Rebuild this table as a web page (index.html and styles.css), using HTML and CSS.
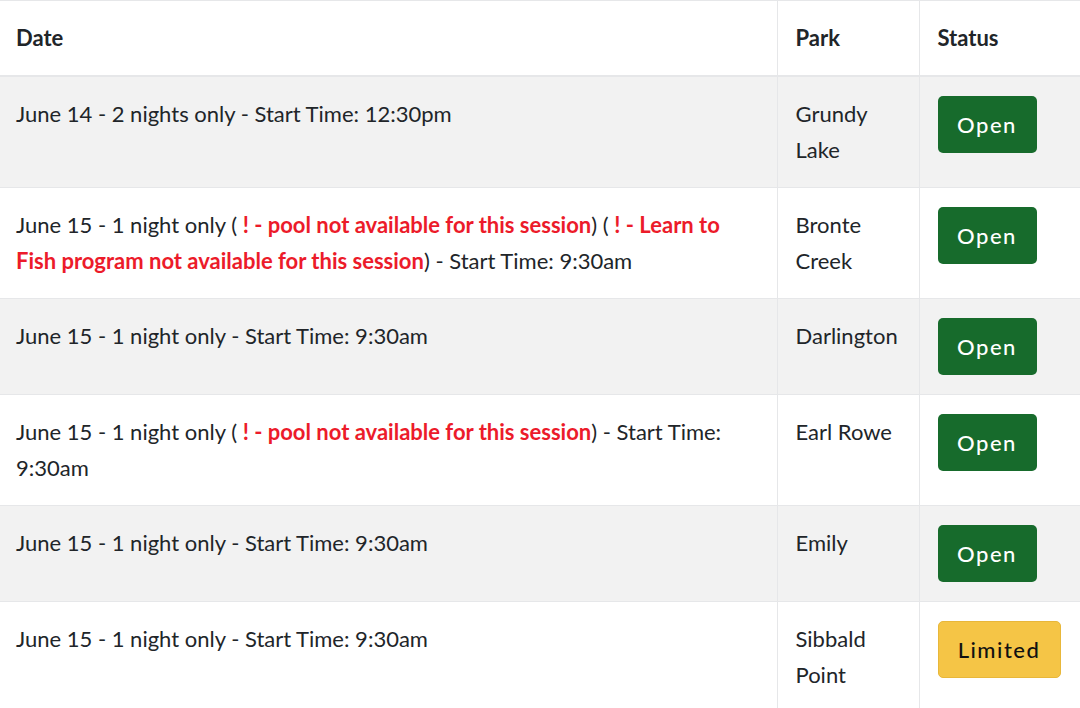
FILE: index.html
```html
<!DOCTYPE html>
<html lang="en">
<head>
<meta charset="utf-8">
<title>Sessions</title>
<link rel="stylesheet" href="styles.css">
</head>
<body>
<table class="sessions">
  <colgroup>
    <col class="col-date">
    <col class="col-park">
    <col class="col-status">
  </colgroup>
  <thead>
    <tr>
      <th>Date</th>
      <th class="sep">Park</th>
      <th class="sep">Status</th>
    </tr>
  </thead>
  <tbody>
    <tr class="alt">
      <td>June 14 - 2 nights only - Start Time: 12:30pm</td>
      <td class="sep">Grundy Lake</td>
      <td class="sep"><span class="badge open">Open</span></td>
    </tr>
    <tr>
      <td>June 15 - 1 night only ( <strong class="warn">! - pool not available for this session</strong>) ( <strong class="warn">! - Learn to Fish program not available for this session</strong>) - Start Time: 9:30am</td>
      <td class="sep">Bronte Creek</td>
      <td class="sep"><span class="badge open">Open</span></td>
    </tr>
    <tr class="alt">
      <td>June 15 - 1 night only - Start Time: 9:30am</td>
      <td class="sep">Darlington</td>
      <td class="sep"><span class="badge open">Open</span></td>
    </tr>
    <tr>
      <td>June 15 - 1 night only ( <strong class="warn">! - pool not available for this session</strong>) - Start Time: 9:30am</td>
      <td class="sep">Earl Rowe</td>
      <td class="sep"><span class="badge open">Open</span></td>
    </tr>
    <tr class="alt">
      <td>June 15 - 1 night only - Start Time: 9:30am</td>
      <td class="sep">Emily</td>
      <td class="sep"><span class="badge open">Open</span></td>
    </tr>
    <tr>
      <td>June 15 - 1 night only - Start Time: 9:30am</td>
      <td class="sep">Sibbald Point</td>
      <td class="sep"><span class="badge limited">Limited</span></td>
    </tr>
  </tbody>
</table>
</body>
</html>
```

FILE: styles.css
```css
html, body {
  margin: 0;
  padding: 0;
  background: #ffffff;
}

body {
  font-family: Lato, "Open Sans", sans-serif;
  font-size: 22px;
  color: #212529;
}

.sessions {
  width: 1080px;
  border-collapse: collapse;
  table-layout: fixed;
  border-top: 1px solid #e6e7e9;
}

.col-date { width: 777px; }
.col-park { width: 142px; }
.col-status { width: 161px; }

.sessions th,
.sessions td {
  text-align: left;
  vertical-align: top;
  padding: 19px 18px 19px 16px;
  line-height: 36px;
  border-bottom: 1px solid #e6e7e9;
}

.sessions th {
  font-weight: 700;
  border-bottom: 2px solid #e6e7e9;
}

.sessions .sep {
  border-left: 1px solid #e6e7e9;
  padding-left: 18px;
}

.sessions tr.alt td {
  background: #f2f2f2;
}

.warn {
  color: #ec1b2a;
  font-weight: 700;
}

.badge {
  display: inline-flex;
  align-items: center;
  justify-content: center;
  height: 57px;
  box-sizing: border-box;
  border-radius: 5px;
  font-size: 22px;
  font-weight: 500;
  letter-spacing: 1.5px;
  vertical-align: top;
}

.badge.open {
  width: 99px;
  background: #176b2c;
  color: #ffffff;
}

.badge.limited {
  width: 123px;
  background: #f5c546;
  color: #111111;
  border: 1px solid #e8b73a;
}
```
